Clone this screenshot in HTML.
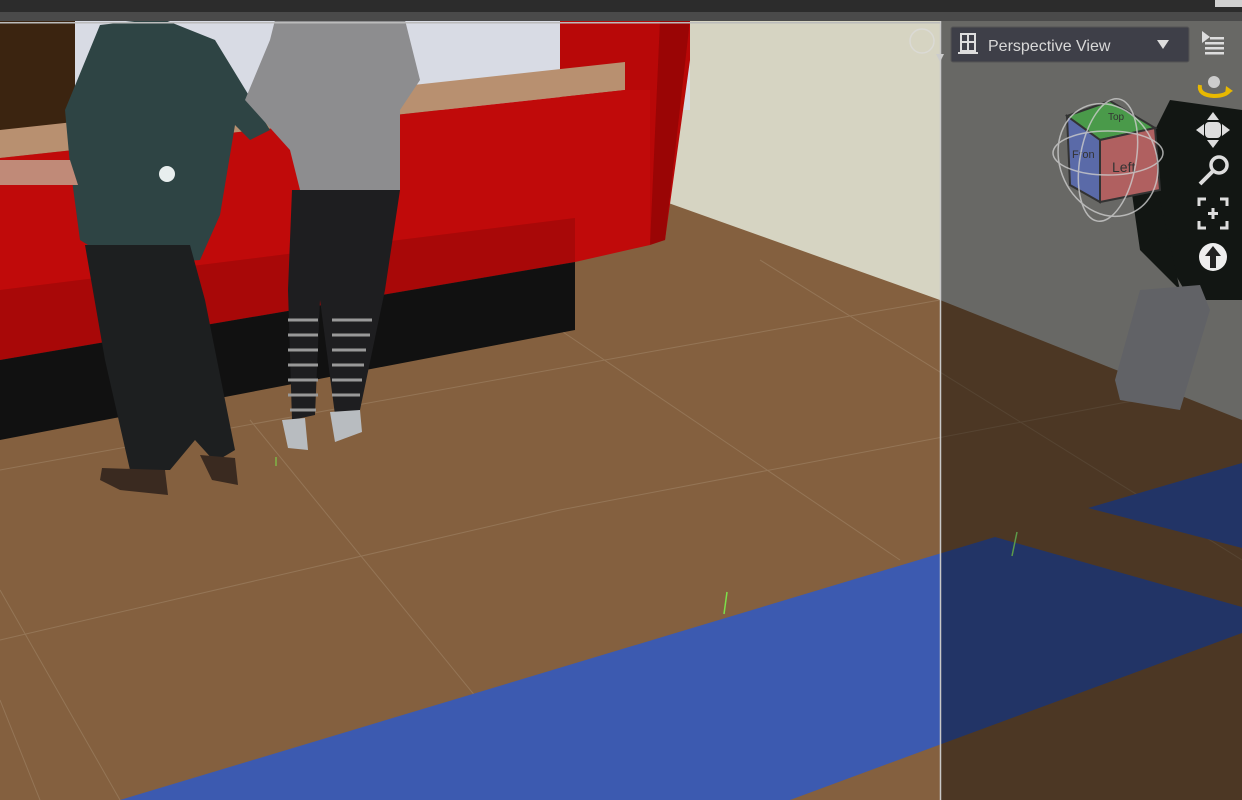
<!DOCTYPE html>
<html><head><meta charset="utf-8"><style>
html,body{margin:0;padding:0;width:1242px;height:800px;overflow:hidden;background:#84603f}
svg{position:absolute;left:0;top:0}
.t{font-family:"Liberation Sans",sans-serif}
</style></head><body>
<svg width="1242" height="800" viewBox="0 0 1242 800">
<rect x="0" y="0" width="1242" height="800" fill="#84603f"/>
<g stroke="#a08466" stroke-width="1" opacity="0.6" fill="none">
<path d="M0 470 L660 350 L940 300"/>
<path d="M0 640 L560 510 L1242 380"/>
<path d="M40 800 L0 700"/>
<path d="M250 420 L560 800"/>
<path d="M560 330 L900 560"/>
<path d="M760 260 L1242 560"/>
<path d="M120 800 L0 590"/>
</g>
<polygon points="680,20 940,20 940,300 660,200" fill="#d6d4c2"/>
<polygon points="940,20 1242,20 1242,420 940,300" fill="#b4b4ae"/>
<rect x="0" y="20" width="690" height="90" fill="#d8dbe4"/>
<rect x="0" y="20" width="75" height="110" fill="#3b2410"/>
<polygon points="560,20 690,20 690,60 665,240 560,262" fill="#b80808"/>
<polygon points="660,20 690,20 665,240 650,245" fill="#9a0505"/>
<polygon points="0,130 0,158 625,90 625,62" fill="#b89070"/>
<polygon points="0,158 625,90 650,90 650,245 575,262 0,360" fill="#c00a0a"/>
<polygon points="0,290 575,218 575,262 0,360" fill="#a80808"/>
<polygon points="0,360 575,262 575,330 0,440" fill="#111"/>
<polygon points="100,25 160,18 215,40 270,130 250,140 235,125 220,215 200,260 170,262 115,262 80,240 70,165 65,110" fill="#2e4444"/>
<polygon points="85,245 190,245 205,300 235,450 215,462 195,440 170,470 130,470 105,360" fill="#1d1f20"/>
<polygon points="102,468 165,470 168,495 120,490 100,480" fill="#3a2a20"/>
<polygon points="200,455 235,458 238,485 212,480" fill="#3a2a20"/>
<polygon points="0,160 70,160 78,185 0,185" fill="#c08a78"/>
<circle cx="167" cy="174" r="8" fill="#e8eeee"/>
<polygon points="275,20 405,20 420,80 400,110 400,190 300,190 290,150 245,100 270,40" fill="#8d8d8f"/>
<polygon points="292,190 400,190 385,290 360,410 335,415 320,300 315,415 292,420 288,290" fill="#1e1e20"/>
<g stroke="#999" stroke-width="3">
<line x1="288" y1="320" x2="318" y2="320"/><line x1="288" y1="335" x2="318" y2="335"/><line x1="288" y1="350" x2="318" y2="350"/><line x1="288" y1="365" x2="318" y2="365"/><line x1="288" y1="380" x2="318" y2="380"/><line x1="288" y1="395" x2="318" y2="395"/><line x1="290" y1="410" x2="316" y2="410"/>
<line x1="332" y1="320" x2="372" y2="320"/><line x1="332" y1="335" x2="370" y2="335"/><line x1="332" y1="350" x2="366" y2="350"/><line x1="332" y1="365" x2="364" y2="365"/><line x1="332" y1="380" x2="362" y2="380"/><line x1="332" y1="395" x2="360" y2="395"/>
</g>
<polygon points="282,420 305,418 308,450 288,448" fill="#b8bcc0"/>
<polygon points="330,412 360,410 362,432 335,442" fill="#b8bcc0"/>
<g fill="#1f2622">
<polygon points="1170,100 1242,110 1242,300 1190,300 1150,230 1130,180"/>
<polygon points="1130,180 1160,200 1180,290 1140,250"/>
</g>
<polygon points="1140,290 1200,285 1210,310 1180,410 1120,400 1115,380" fill="#a8aab0"/>
<polygon points="120,800 995,537 1242,607 1242,633 790,800" fill="#3c5ab0"/>
<polygon points="1088,508 1242,463 1242,548" fill="#3c5ab0"/>
<line x1="727" y1="592" x2="724" y2="614" stroke="#7ce04a" stroke-width="1.5"/>
<line x1="276" y1="457" x2="276" y2="466" stroke="#7ce04a" stroke-width="1"/>
<rect x="941" y="20" width="301" height="780" fill="#000" opacity="0.42"/>
<line x1="940.5" y1="20" x2="940.5" y2="800" stroke="#c8c8c8" stroke-width="1.5"/>
<line x1="1017" y1="532" x2="1012" y2="556" stroke="#5c9a4a" stroke-width="1.5"/>
<rect x="0" y="0" width="1242" height="12" fill="#2c2c2c"/>
<rect x="0" y="12" width="1242" height="9" fill="#4a4a4a"/>
<rect x="0" y="22" width="940" height="1.5" fill="#bbb"/>
<rect x="1215" y="0" width="27" height="7" fill="#d0d0d0"/>
<circle cx="922" cy="41" r="12" fill="none" stroke="#ddd" stroke-width="1.5" opacity="0.7"/>
<polygon points="936,54 944,54 940,62" fill="#ccc"/>
<rect x="951" y="27" width="238" height="35" rx="2" fill="#3e3f48" stroke="#555" stroke-width="1"/>
<g stroke="#ddd" stroke-width="2" fill="none"><rect x="961" y="34" width="14" height="17"/><line x1="968" y1="34" x2="968" y2="51"/><line x1="961" y1="42" x2="975" y2="42"/><line x1="958" y1="53" x2="978" y2="53"/></g>
<text x="988" y="51" class="t" font-size="16" fill="#d8d8d8">Perspective View</text>
<polygon points="1157,40 1169,40 1163,49" fill="#ddd"/>
<g fill="#ddd"><polygon points="1202,31 1210,37 1202,43"/><rect x="1210" y="37" width="14" height="2.5"/><rect x="1205" y="42" width="19" height="2.5"/><rect x="1205" y="47" width="19" height="2.5"/><rect x="1205" y="52" width="19" height="2.5"/></g>
<circle cx="1214" cy="82" r="6" fill="#ccc"/>
<path d="M1200 85 Q1198 95 1214 96 Q1226 96 1230 90" fill="none" stroke="#e8b800" stroke-width="4"/>
<polygon points="1226,86 1233,91 1225,95" fill="#e8b800"/>
<g fill="#ddd"><rect x="1205" y="122" width="16" height="16" rx="4"/><polygon points="1213,112 1219,120 1207,120"/><polygon points="1213,148 1219,140 1207,140"/><polygon points="1196,130 1204,124 1204,136"/><polygon points="1230,130 1222,124 1222,136"/></g>
<circle cx="1219" cy="165" r="8" fill="none" stroke="#ddd" stroke-width="3.5"/>
<line x1="1213" y1="171" x2="1200" y2="184" stroke="#ddd" stroke-width="4"/>
<g stroke="#ddd" stroke-width="3" fill="none"><path d="M1199 206 V199 H1206"/><path d="M1220 199 H1227 V206"/><path d="M1199 221 V228 H1206"/><path d="M1220 228 H1227 V221"/><path d="M1213 208 V219 M1208 213.5 H1218"/></g>
<circle cx="1213" cy="257" r="14" fill="#eee"/>
<polygon points="1213,246 1221,256 1216,256 1216,268 1210,268 1210,256 1205,256" fill="#222"/>
<polygon points="1067,116 1110,101 1155,128 1100,140" fill="#4a9a4a" stroke="#333" stroke-width="2"/>
<polygon points="1067,116 1100,140 1100,202 1070,185" fill="#5a6aa8" stroke="#333" stroke-width="2"/>
<polygon points="1100,140 1155,128 1160,190 1100,202" fill="#b06060" stroke="#333" stroke-width="2"/>
<text x="1112" y="172" class="t" font-size="14" fill="#333">Left</text>
<text x="1072" y="158" class="t" font-size="11" fill="#333">Fron</text>
<text x="1108" y="120" class="t" font-size="10" fill="#333">Top</text>
<g fill="none" stroke="#ccc" stroke-width="1.5" opacity="0.8">
<ellipse cx="1108" cy="153" rx="55" ry="22"/>
<ellipse cx="1108" cy="160" rx="28" ry="62" transform="rotate(10 1108 160)"/>
<ellipse cx="1108" cy="160" rx="48" ry="58" transform="rotate(-25 1108 160)"/>
</g>
</svg>
</body></html>
